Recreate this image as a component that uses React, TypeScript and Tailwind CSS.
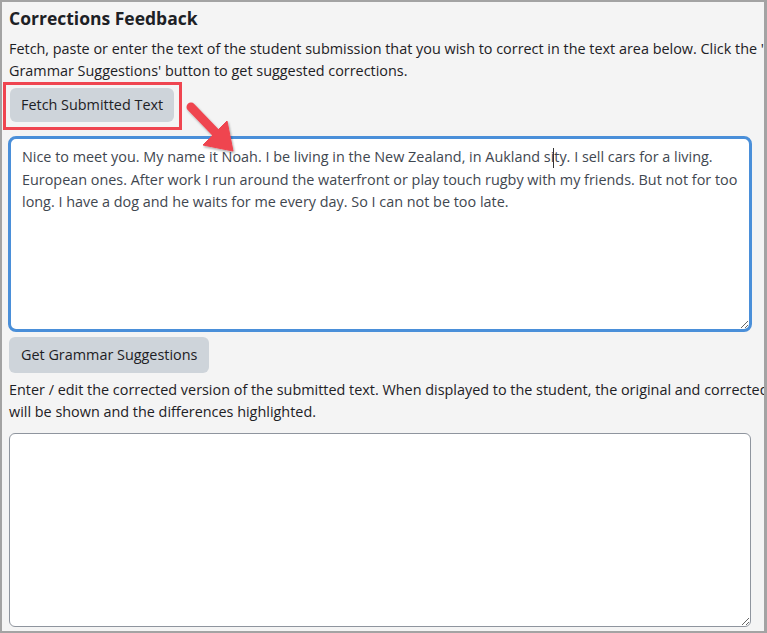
import { useState } from 'react';

const font = { fontFamily: '"Open Sans", "Liberation Sans", sans-serif' };

function App() {
    const [original, setOriginal] = useState(
        "Nice to meet you. My name it Noah. I be living in the New Zealand, in Aukland sity. I sell cars for a living. European ones. After work I run around the waterfront or play touch rugby with my friends. But not for too long. I have a dog and he waits for me every day. So I can not be too late."
    );
    const [corrected, setCorrected] = useState('');

    return (
        <div
            className="relative w-[767px] h-[633px] overflow-hidden bg-[#f4f4f4] border-2 border-r-[3px] border-[#a3a3a3] text-[#1d2125]"
            style={font}
        >
            <div className="pl-[7px] w-[900px]">
                <h3 className="mt-[3px] text-[17.5px] leading-[26px] font-bold">Corrections Feedback</h3>
                <p className="mt-[7px] text-[14.4px] leading-[22px]">
                    Fetch, paste or enter the text of the student submission that you wish to correct in the text area below. Click the 'Get
                    <br />
                    Grammar Suggestions' button to get suggested corrections.
                </p>
                <button className="mt-[6px] ml-[1px] h-[34px] px-[11px] rounded-[6px] bg-[#ced4da] text-[14.4px] text-[#1d2125]">
                    Fetch Submitted Text
                </button>
            </div>

            <div className="pl-[6px] pr-[12px] mt-[14px]">
                <textarea
                    className="block w-[744px] h-[196px] rounded-[8px] border-[3px] border-[#4a8fd9] bg-white pl-[11px] pr-[10px] pt-[7px] text-[14.4px] leading-[22.5px] text-[#3f4750] outline-none resize-y"
                    style={font}
                    value={original}
                    onChange={(e) => setOriginal(e.target.value)}
                />
            </div>

            <div className="pl-[7px] w-[900px]">
                <button className="mt-[5px] h-[36px] px-[12px] rounded-[6px] bg-[#ced4da] text-[14.4px] text-[#1d2125]">
                    Get Grammar Suggestions
                </button>
                <p className="mt-[6px] text-[14.4px] leading-[22px]">
                    Enter / edit the corrected version of the submitted text. When displayed to the student, the original and corrected text
                    <br />
                    will be shown and the differences highlighted.
                </p>
            </div>

            <div className="pl-[7px] mt-[10px]">
                <textarea
                    className="block w-[742px] h-[194px] rounded-[6px] border border-[#8f959e] bg-white px-3 py-1.5 text-[14.4px] outline-none resize-y"
                    style={font}
                    value={corrected}
                    onChange={(e) => setCorrected(e.target.value)}
                />
            </div>

            {/* caret in "sity" */}
            <div className="absolute left-[551px] top-[146px] w-px h-[20px] bg-[#333]" />

            {/* red highlight box */}
            <div className="absolute left-[1px] top-[80px] w-[179px] h-[48px] border-[3px] border-[#ef4550]" />

            {/* arrow */}
            <svg className="absolute left-[180px] top-[95px]" width="62" height="64" viewBox="0 0 62 64">
                <defs>
                    <filter id="sh" x="-20%" y="-20%" width="140%" height="140%">
                        <feDropShadow dx="1" dy="1.5" stdDeviation="1" floodColor="#000" floodOpacity="0.35" />
                    </filter>
                </defs>
                <g filter="url(#sh)" fill="#ef4550" stroke="#ef4550">
                    <line x1="9" y1="10" x2="35" y2="37" strokeWidth="9" strokeLinecap="round" />
                    <polygon points="51,54 21,48 45,24" strokeWidth="1" strokeLinejoin="round" />
                </g>
            </svg>
        </div>
    );
}

export default App;
